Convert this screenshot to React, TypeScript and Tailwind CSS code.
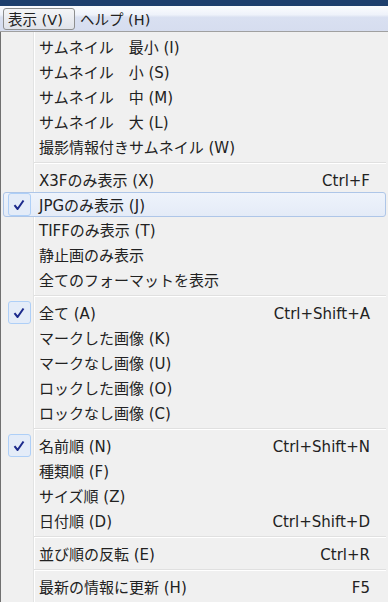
import React from "react";

type Item =
  | { sep: true }
  | { sep?: false; label: string; shortcut?: string; checked?: boolean; hover?: boolean };

const items: Item[] = [
  { label: "サムネイル　最小 (I)" },
  { label: "サムネイル　小 (S)" },
  { label: "サムネイル　中 (M)" },
  { label: "サムネイル　大 (L)" },
  { label: "撮影情報付きサムネイル (W)" },
  { sep: true },
  { label: "X3Fのみ表示 (X)", shortcut: "Ctrl+F" },
  { label: "JPGのみ表示 (J)", checked: true, hover: true },
  { label: "TIFFのみ表示 (T)" },
  { label: "静止画のみ表示" },
  { label: "全てのフォーマットを表示" },
  { sep: true },
  { label: "全て (A)", shortcut: "Ctrl+Shift+A", checked: true },
  { label: "マークした画像 (K)" },
  { label: "マークなし画像 (U)" },
  { label: "ロックした画像 (O)" },
  { label: "ロックなし画像 (C)" },
  { sep: true },
  { label: "名前順 (N)", shortcut: "Ctrl+Shift+N", checked: true },
  { label: "種類順 (F)" },
  { label: "サイズ順 (Z)" },
  { label: "日付順 (D)", shortcut: "Ctrl+Shift+D" },
  { sep: true },
  { label: "並び順の反転 (E)", shortcut: "Ctrl+R" },
  { sep: true },
  { label: "最新の情報に更新 (H)", shortcut: "F5" },
];

const font = { fontFamily: '"DejaVu Sans", "Noto Sans CJK JP", sans-serif' };

function Check() {
  return (
    <div className="w-[23px] h-[23px] rounded-[3px] border border-[#aecff7] bg-[#e4ecf8] flex items-center justify-center">
      <svg width="12" height="12" viewBox="0 0 12 12">
        <path d="M1.5 6.2 L4.6 10 L10.5 1.5" fill="none" stroke="#1c2a8c" strokeWidth="2" strokeLinejoin="round" />
      </svg>
    </div>
  );
}

export default function App() {
  return (
    <div className="w-[388px] h-[602px] bg-[#f0f0f0] overflow-hidden text-[15px] text-[#222]" style={font}>
      <div className="h-[6px] bg-[#1e3f6d]" />
      <div className="h-[26px] border-b border-[#a0a0a0] bg-[linear-gradient(#fbfcfe_0%,#eef2fa_35%,#d9e0f1_45%,#d6ddef_100%)] flex items-center px-[3px] gap-[2px] text-[14.5px]">
        <div className="h-[22px] w-[72px] rounded-[3px] border border-[#8e8f8f] bg-[linear-gradient(#f4f5f7,#e0e3ea)] flex items-center pl-[4px] pt-[3px] leading-none">
          表示 (V)
        </div>
        <div className="pl-[3px] pt-[3px] leading-none">ヘルプ (H)</div>
      </div>
      <div className="relative flex flex-col pt-[2px] pl-[2px] pr-[2px] border-l border-[#707070] h-full">
        <div className="absolute left-[32px] top-0 bottom-0 w-[2px] border-l border-[#e2e3e3] bg-white" />
        {items.map((it, i) =>
          it.sep ? (
            <div key={i} className="h-[8px] flex items-center pl-[31px]">
              <div className="w-full h-[2px] border-t border-[#e0e0e0] bg-white relative" />
            </div>
          ) : (
            <div
              key={i}
              className={
                "relative h-[25px] flex items-center rounded-[3px] border " +
                (it.hover ? "border-[#aec6e8] bg-[linear-gradient(#eef3fb,#e4ebf7)]" : "border-transparent")
              }
            >
              <div className="w-[30px] flex items-center justify-center">{it.checked ? <Check /> : null}</div>
              <div className="pl-[5px] pt-[3px] flex-1 leading-none">{it.label}</div>
              {it.shortcut ? <div className="pr-[15px] pt-[3px] leading-none">{it.shortcut}</div> : null}
            </div>
          )
        )}
      </div>
    </div>
  );
}
